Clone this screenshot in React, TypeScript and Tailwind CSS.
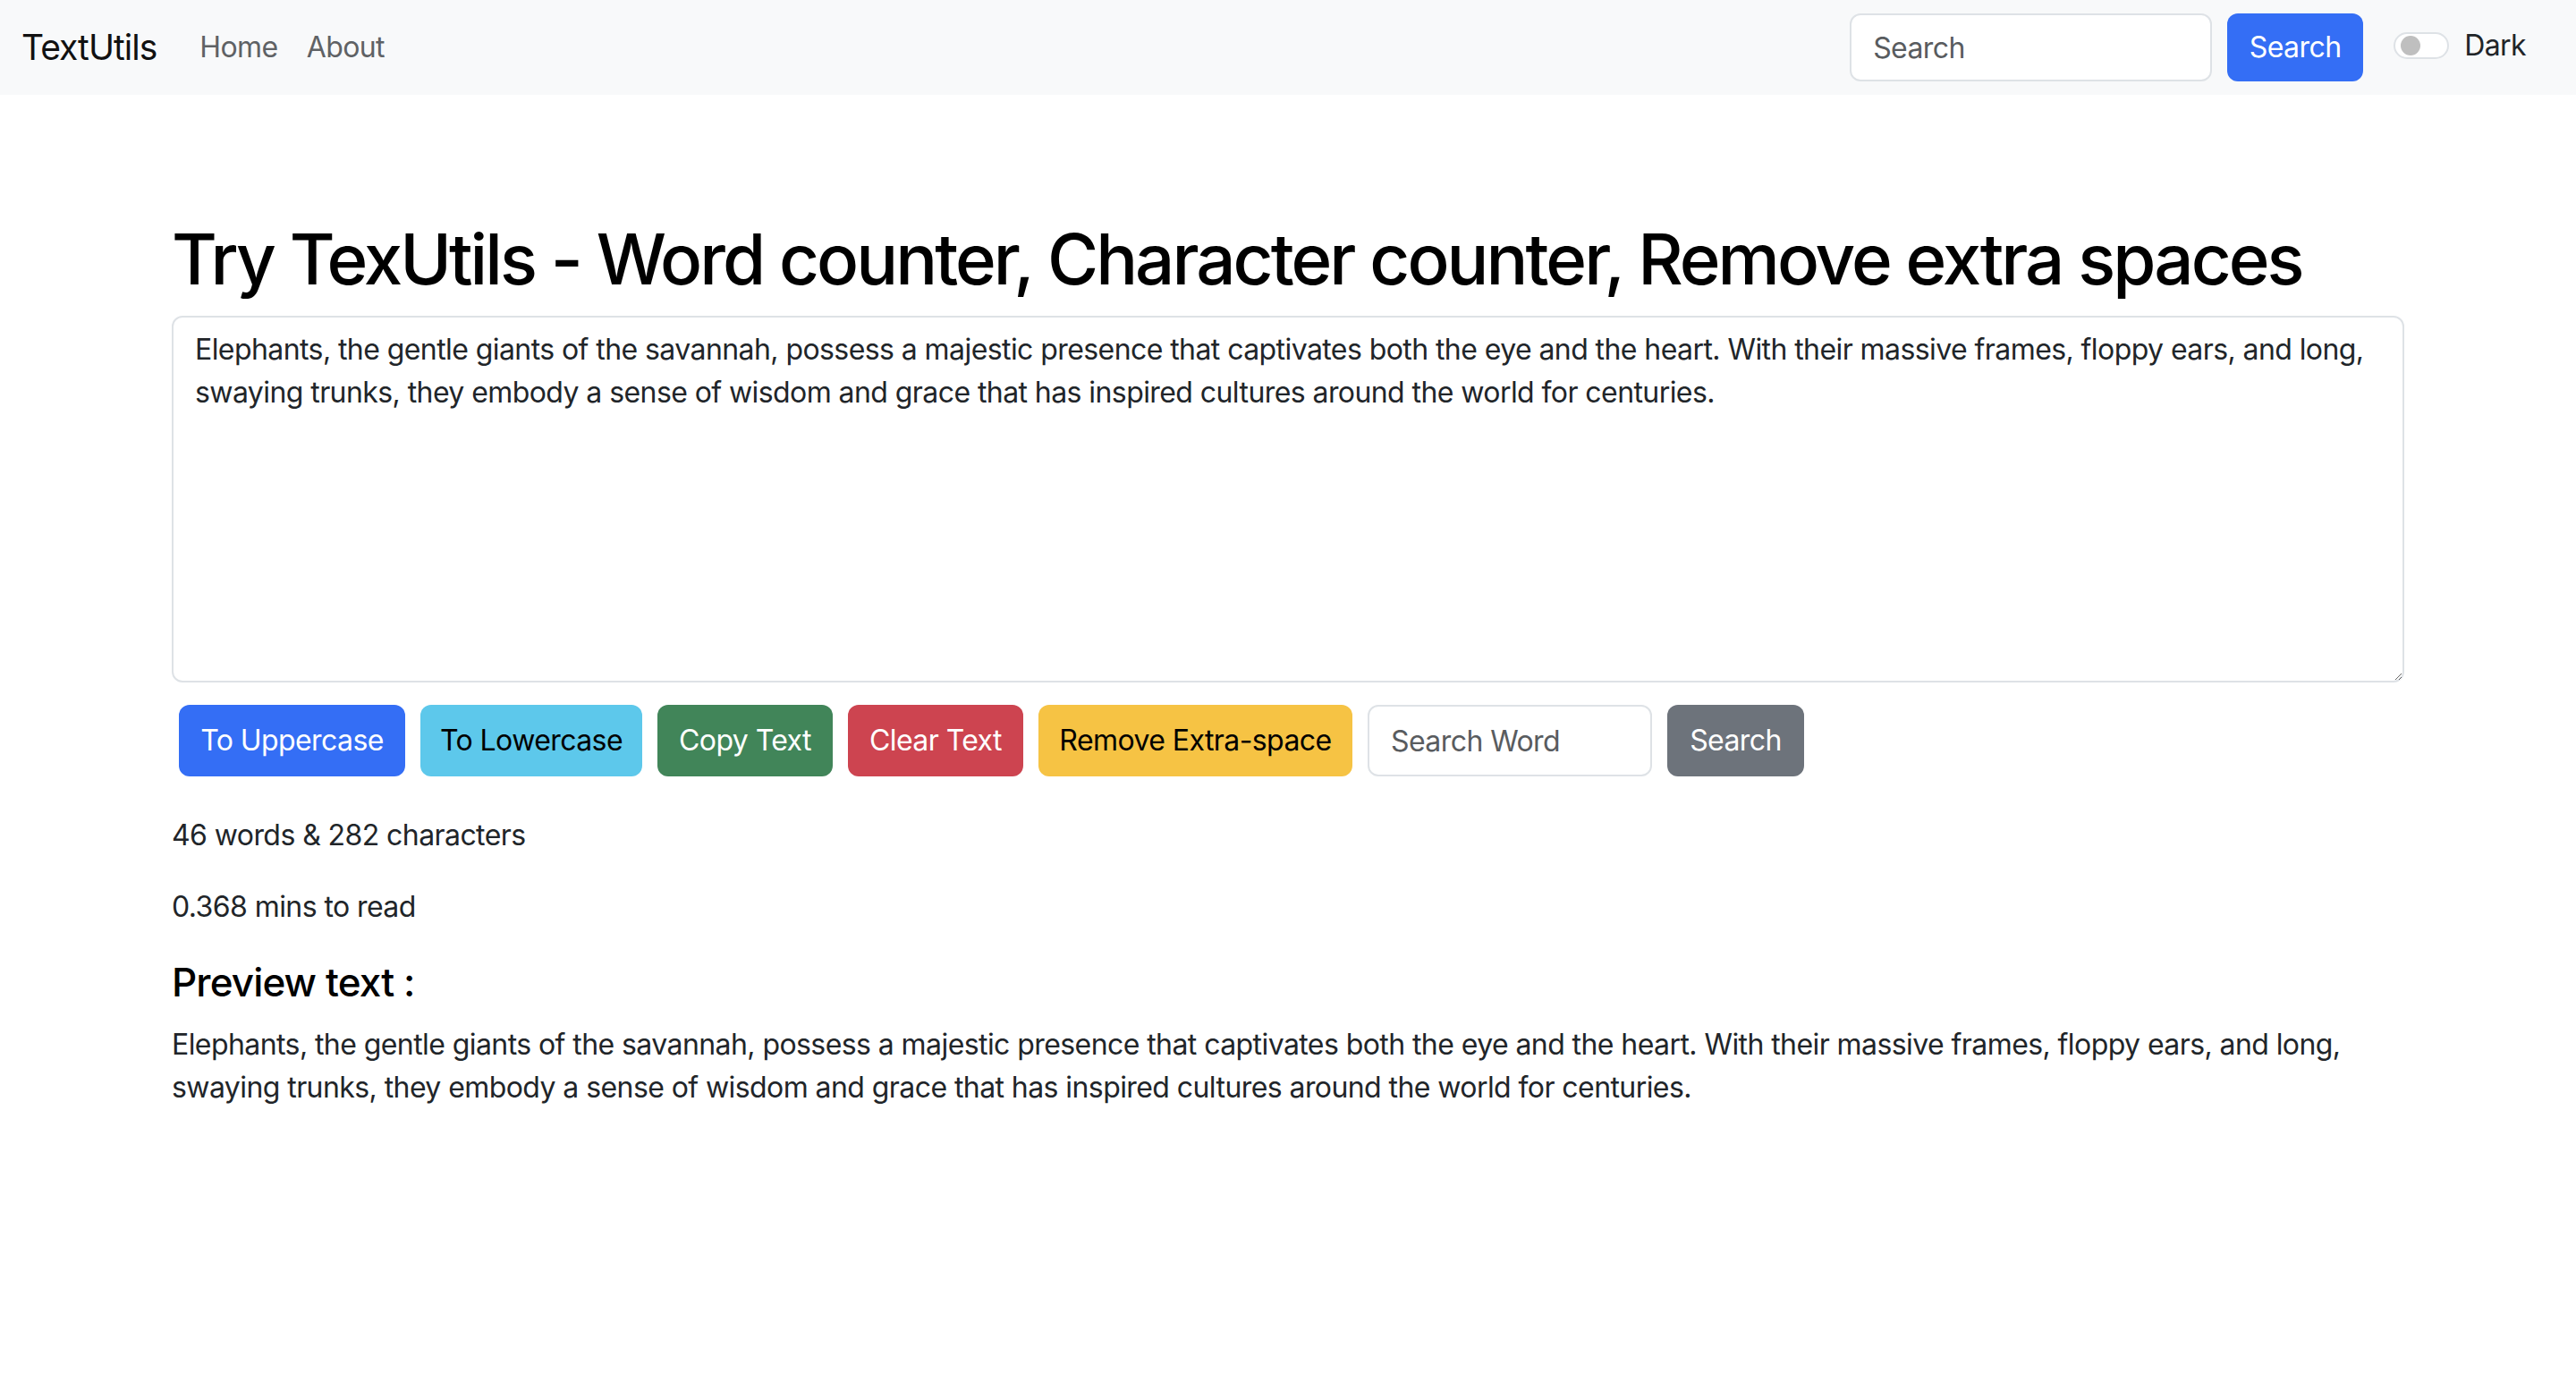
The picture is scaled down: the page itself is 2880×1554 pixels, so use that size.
const SAMPLE =
  "Elephants, the gentle giants of the savannah, possess a majestic presence that captivates both the eye and the heart. With their massive frames, floppy ears, and long, swaying trunks, they embody a sense of wisdom and grace that has inspired cultures around the world for centuries.";

function Navbar() {
  return (
    <nav className="flex h-[106px] items-center bg-[#f8f9fa] pl-6 pr-[56px]">
      <a href="#" className="mr-8 text-[39px] leading-[60px] tracking-[-0.025em] text-[#111]">
        TextUtils
      </a>
      <ul className="flex items-center">
        <li>
          <a href="#" className="px-4 text-[32px] leading-[48px] text-[#5f6265]">
            Home
          </a>
        </li>
        <li>
          <a href="#" className="px-4 text-[32px] leading-[48px] text-[#5f6265]">
            About
          </a>
        </li>
      </ul>

      <div className="ml-auto flex items-center">
        <form className="flex items-center" onSubmit={(e) => e.preventDefault()}>
          <input
            type="search"
            placeholder="Search"
            className="h-[76px] w-[405px] rounded-[12px] border-2 border-[#dee2e6] bg-white px-6 text-[32px] text-[#212529] outline-none placeholder:text-[#595c5f]"
          />
          <button
            type="submit"
            className="ml-[17px] h-[76px] w-[152px] rounded-[12px] bg-[#346ef5] text-[32px] text-white"
          >
            Search
          </button>
        </form>

        <label className="mb-[4px] ml-[34px] flex items-center">
          <span className="flex h-[30px] w-[62px] items-center rounded-full border-2 border-[#dee2e6] bg-white">
            <span className="ml-[6px] h-[22px] w-[22px] rounded-full bg-[#bfbfbf]" />
          </span>
          <span className="ml-[17px] text-[32px] leading-[48px] text-[#212529]">Dark</span>
        </label>
      </div>
    </nav>
  );
}

const BUTTONS = [
  { label: "To Uppercase", cls: "w-[253px] bg-[#346ef5] text-white" },
  { label: "To Lowercase", cls: "w-[248px] bg-[#5dc8eb] text-black" },
  { label: "Copy Text", cls: "w-[196px] bg-[#418559] text-white" },
  { label: "Clear Text", cls: "w-[196px] bg-[#cd4450] text-white" },
  { label: "Remove Extra-space", cls: "w-[351px] bg-[#f6c344] text-black" },
];

export default function App() {
  return (
    <div className="min-h-screen bg-white font-[Inter,sans-serif] tracking-[-0.036em] text-[#212529]">
      <Navbar />

      <main className="mx-auto w-[2496px] pt-[136px]">
        <h1 className="mb-[15px] text-[78px] font-medium leading-[96px] tracking-[-0.038em] whitespace-nowrap text-black">
          Try TexUtils - Word counter, Character counter, Remove extra spaces
        </h1>

        <textarea
          rows={8}
          defaultValue={SAMPLE}
          className="block h-[410px] w-full resize-y rounded-[12px] border-2 border-[#dee2e6] px-6 py-3 text-[32px] leading-[48px] text-[#212529] outline-none"
        />

        <div className="mt-[25px] ml-2 flex items-center gap-[17px]">
          {BUTTONS.map((b) => (
            <button
              key={b.label}
              className={`h-[80px] rounded-[12px] text-[32px] leading-[48px] ${b.cls}`}
            >
              {b.label}
            </button>
          ))}
          <input
            type="text"
            placeholder="Search Word"
            className="h-[80px] w-[318px] rounded-[12px] border-2 border-[#dee2e6] bg-white px-6 text-[32px] text-[#212529] outline-none placeholder:text-[#595c5f]"
          />
          <button className="h-[80px] w-[153px] rounded-[12px] bg-[#6d737b] text-[32px] text-white">
            Search
          </button>
        </div>

        <div className="mt-[42px] text-[32px] leading-[48px]">
          <p>46 words &amp; 282 characters</p>
          <p className="mt-8">0.368 mins to read</p>
        </div>

        <h2 className="mt-[34px] mb-[19px] text-[44px] font-medium leading-[1.2] tracking-[-0.02em] text-black">
          Preview text :
        </h2>
        <p className="text-[32px] leading-[48px]">{SAMPLE}</p>
      </main>
    </div>
  );
}
